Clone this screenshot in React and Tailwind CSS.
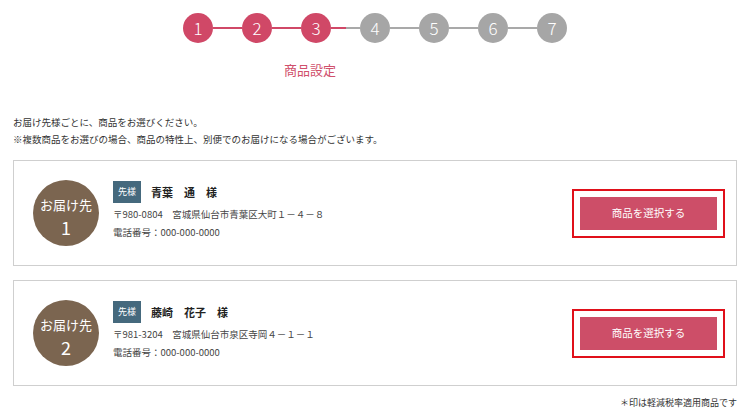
import React from "react";

const steps = [1, 2, 3, 4, 5, 6, 7];
const current = 3;

const Stepper = () => (
  <div className="flex items-center justify-center pt-[13px]">
    {steps.map((n, i) => {
      const done = n <= current;
      return (
        <React.Fragment key={n}>
          {i > 0 && (
            <div className="flex w-[29px]">
              <div
                className={`h-[2px] w-1/2 ${n - 1 <= current ? "bg-[#d04867]" : "bg-[#a9a9a9]"}`}
              ></div>
              <div
                className={`h-[2px] w-1/2 ${n <= current ? "bg-[#d04867]" : "bg-[#a9a9a9]"}`}
              ></div>
            </div>
          )}
          <div
            className={`flex h-[30px] w-[30px] items-center justify-center rounded-full text-[17px] font-light text-white ${
              done ? "bg-[#d04867]" : "bg-[#a6a6a6]"
            }`}
          >
            {n}
          </div>
        </React.Fragment>
      );
    })}
  </div>
);

const DeliveryCard = ({ no, name, address, phone }) => (
  <div className="flex items-center border border-[#cfcfcf] bg-white py-[19px] pl-[19px] pr-[11px]">
    <div className="flex h-[66px] w-[66px] shrink-0 flex-col items-center rounded-full bg-[#7b6550] pt-[15px] text-white">
      <span className="text-[13px] leading-[19px]">お届け先</span>
      <span className="text-[18px] leading-[26px]">{no}</span>
    </div>
    <div className="ml-[14px] flex-1 self-start pt-[1px]">
      <div className="flex items-center">
        <span className="flex h-[22px] w-[28px] items-center justify-center bg-[#45697d] text-[9px] text-white">
          先様
        </span>
        <span className="ml-[10px] text-[11px] font-bold text-[#222]">{name}</span>
      </div>
      <p className="mt-[2px] text-[9.5px] leading-[18px] text-[#444]">{address}</p>
      <p className="text-[9.5px] leading-[18px] text-[#444]">{phone}</p>
    </div>
    <div className="border-2 border-[#e0101a] p-[6px]">
      <button className="flex h-[33px] w-[137px] items-center justify-center bg-[#cd4e68] text-[10.5px] text-white">
        商品を選択する
      </button>
    </div>
  </div>
);

export default function App() {
  return (
    <div
      className="h-[418px] w-[750px] overflow-hidden bg-white"
      style={{ fontFamily: '"Noto Sans CJK JP", "Noto Sans", sans-serif' }}
    >
      <Stepper />
      <div className="mt-[18px] flex justify-center">
        <span className="mr-[130px] text-[13px] leading-[18px] text-[#d0506c]">商品設定</span>
      </div>
      <div className="px-[13px]">
        <div className="mt-[35px] text-[9.5px] leading-[17px] text-[#333]">
          <p>お届け先様ごとに、商品をお選びください。</p>
          <p>※複数商品をお選びの場合、商品の特性上、別便でのお届けになる場合がございます。</p>
        </div>
        <div className="mt-[12px] flex flex-col gap-[14px]">
          <DeliveryCard
            no="1"
            name="青葉　通　様"
            address="〒980-0804　宮城県仙台市青葉区大町１－４－８"
            phone="電話番号：000-000-0000"
          />
          <DeliveryCard
            no="2"
            name="藤崎　花子　様"
            address="〒981-3204　宮城県仙台市泉区寺岡４－１－１"
            phone="電話番号：000-000-0000"
          />
        </div>
        <p className="mt-[8px] text-right text-[9px] leading-[17px] text-[#333]">
          ＊印は軽減税率適用商品です
        </p>
      </div>
    </div>
  );
}
